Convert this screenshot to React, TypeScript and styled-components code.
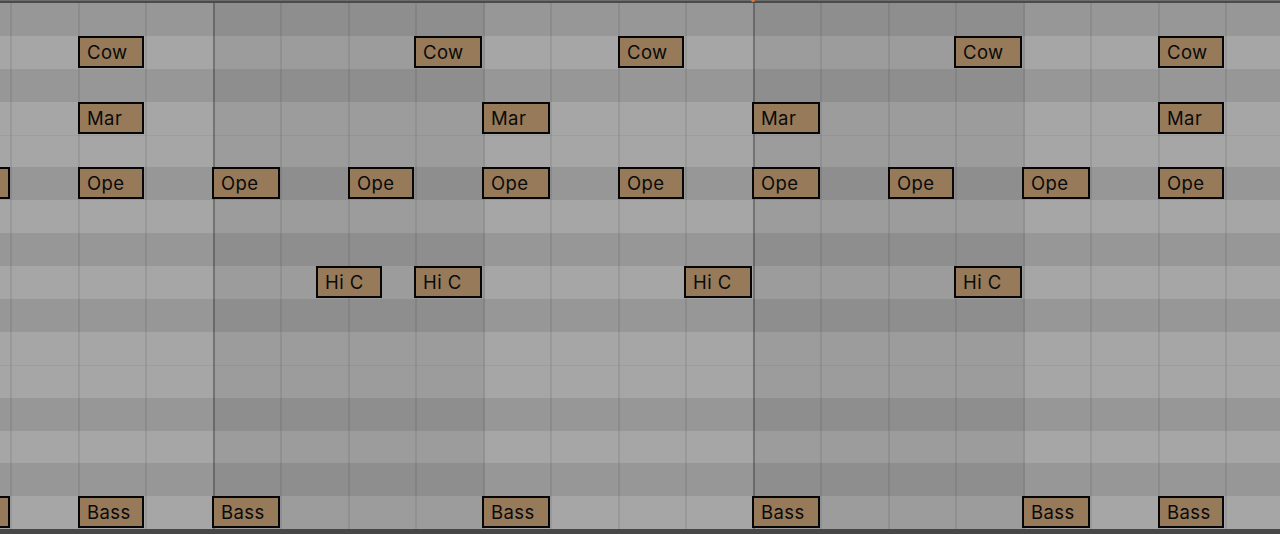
import React from "react";
import styled, { createGlobalStyle } from "styled-components";

const GlobalStyle = createGlobalStyle`
  html, body {
    margin: 0;
    padding: 0;
    background: #474747;
    overflow: hidden;
  }
  * { box-sizing: border-box; }
`;

const Roll = styled.div`
  position: relative;
  width: 1280px;
  height: 534px;
  overflow: hidden;
  display: flex;
  flex-direction: column;
  background: #474747;
  font-family: Inter, "Liberation Sans", sans-serif;
`;

const TopRule = styled.div`
  position: relative;
  flex: 0 0 3px;
  background: #4b4b4b;
  border-top: 1px solid #6c6c6c;
`;

const PlayheadMark = styled.span`
  position: absolute;
  left: 751px;
  top: -1px;
  width: 4px;
  height: 2px;
  background: #e9763a;
  border-radius: 0 0 2px 2px;
`;

const Lanes = styled.div`
  display: flex;
  flex-direction: column;
`;

const Lane = styled.div<{ $dark: boolean; $sep: boolean }>`
  position: relative;
  height: 32.9px;
  background: ${(p) => (p.$dark ? "#979797" : "#a6a6a6")};
  box-shadow: ${(p) => (p.$sep ? "inset 0 1px 0 rgba(0,0,0,0.05)" : "none")};
`;

const BottomRule = styled.div`
  flex: 1;
  background: #474747;
`;

const GridOverlay = styled.div`
  position: absolute;
  z-index: 1;
  left: 0;
  right: 0;
  top: 3px;
  height: 526.4px;
  display: flex;
  pointer-events: none;
`;

const Lead = styled.div`
  flex: 0 0 10px;
`;

type LineKind = "weak" | "medium" | "strong";

const lineColor: Record<LineKind, string> = {
  weak: "rgba(0,0,0,0.075)",
  medium: "rgba(0,0,0,0.12)",
  strong: "rgba(0,0,0,0.26)",
};

const Beat = styled.div<{ $kind: LineKind; $shaded: boolean }>`
  flex: 0 0 67.5px;
  border-left: 2px solid ${(p) => lineColor[p.$kind]};
  background: ${(p) => (p.$shaded ? "rgba(0,0,0,0.055)" : "transparent")};
`;

const Note = styled.div<{ $left: number; $width: number }>`
  position: absolute;
  z-index: 2;
  top: 0;
  left: ${(p) => p.$left}px;
  width: ${(p) => p.$width}px;
  height: calc(100% - 1px);
  display: flex;
  align-items: center;
  padding-left: 7px;
  background: #967a5a;
  border: 2px solid #060606;
  color: #0a0a0a;
  font-size: 18.5px;
  letter-spacing: 0.4px;
  white-space: nowrap;
  overflow: hidden;
`;

type NoteDef = [number, number];

const laneShades = [
  "D", "L", "D", "L", "Ls", "D", "L", "D", "L", "D", "L", "Ls", "D", "L", "D", "L",
];

const laneNotes: Record<number, { label: string; notes: NoteDef[] }> = {
  1: {
    label: "Cow",
    notes: [[78, 66], [414, 68], [618, 66], [954, 68], [1158, 66]],
  },
  3: {
    label: "Mar",
    notes: [[78, 66], [482, 68], [752, 68], [1158, 66]],
  },
  5: {
    label: "Ope",
    notes: [
      [-56, 66], [78, 66], [212, 68], [348, 66], [482, 68],
      [618, 66], [752, 68], [888, 66], [1022, 68], [1158, 66],
    ],
  },
  8: {
    label: "Hi C",
    notes: [[316, 66], [414, 68], [684, 68], [954, 68]],
  },
  15: {
    label: "Bass",
    notes: [[-56, 66], [78, 66], [212, 68], [482, 68], [752, 68], [1022, 68], [1158, 66]],
  },
};

const beats = Array.from({ length: 19 }, (_, k) => {
  const kind: LineKind =
    k === 3 || k === 11 ? "strong" : k === 7 || k === 15 ? "medium" : "weak";
  const shaded = (k >= 3 && k <= 6) || (k >= 11 && k <= 14);
  return { k, kind, shaded };
});

export default function App() {
  return (
    <>
      <GlobalStyle />
      <Roll>
        <TopRule>
          <PlayheadMark />
        </TopRule>
        <Lanes>
          {laneShades.map((s, i) => {
            const data = laneNotes[i];
            return (
              <Lane key={i} $dark={s === "D"} $sep={s === "Ls"}>
                {data &&
                  data.notes.map(([left, width], j) => (
                    <Note key={j} $left={left} $width={width}>
                      {left >= 0 ? data.label : null}
                    </Note>
                  ))}
              </Lane>
            );
          })}
        </Lanes>
        <BottomRule />
        <GridOverlay>
          <Lead />
          {beats.map((b) => (
            <Beat key={b.k} $kind={b.kind} $shaded={b.shaded} />
          ))}
        </GridOverlay>
      </Roll>
    </>
  );
}
